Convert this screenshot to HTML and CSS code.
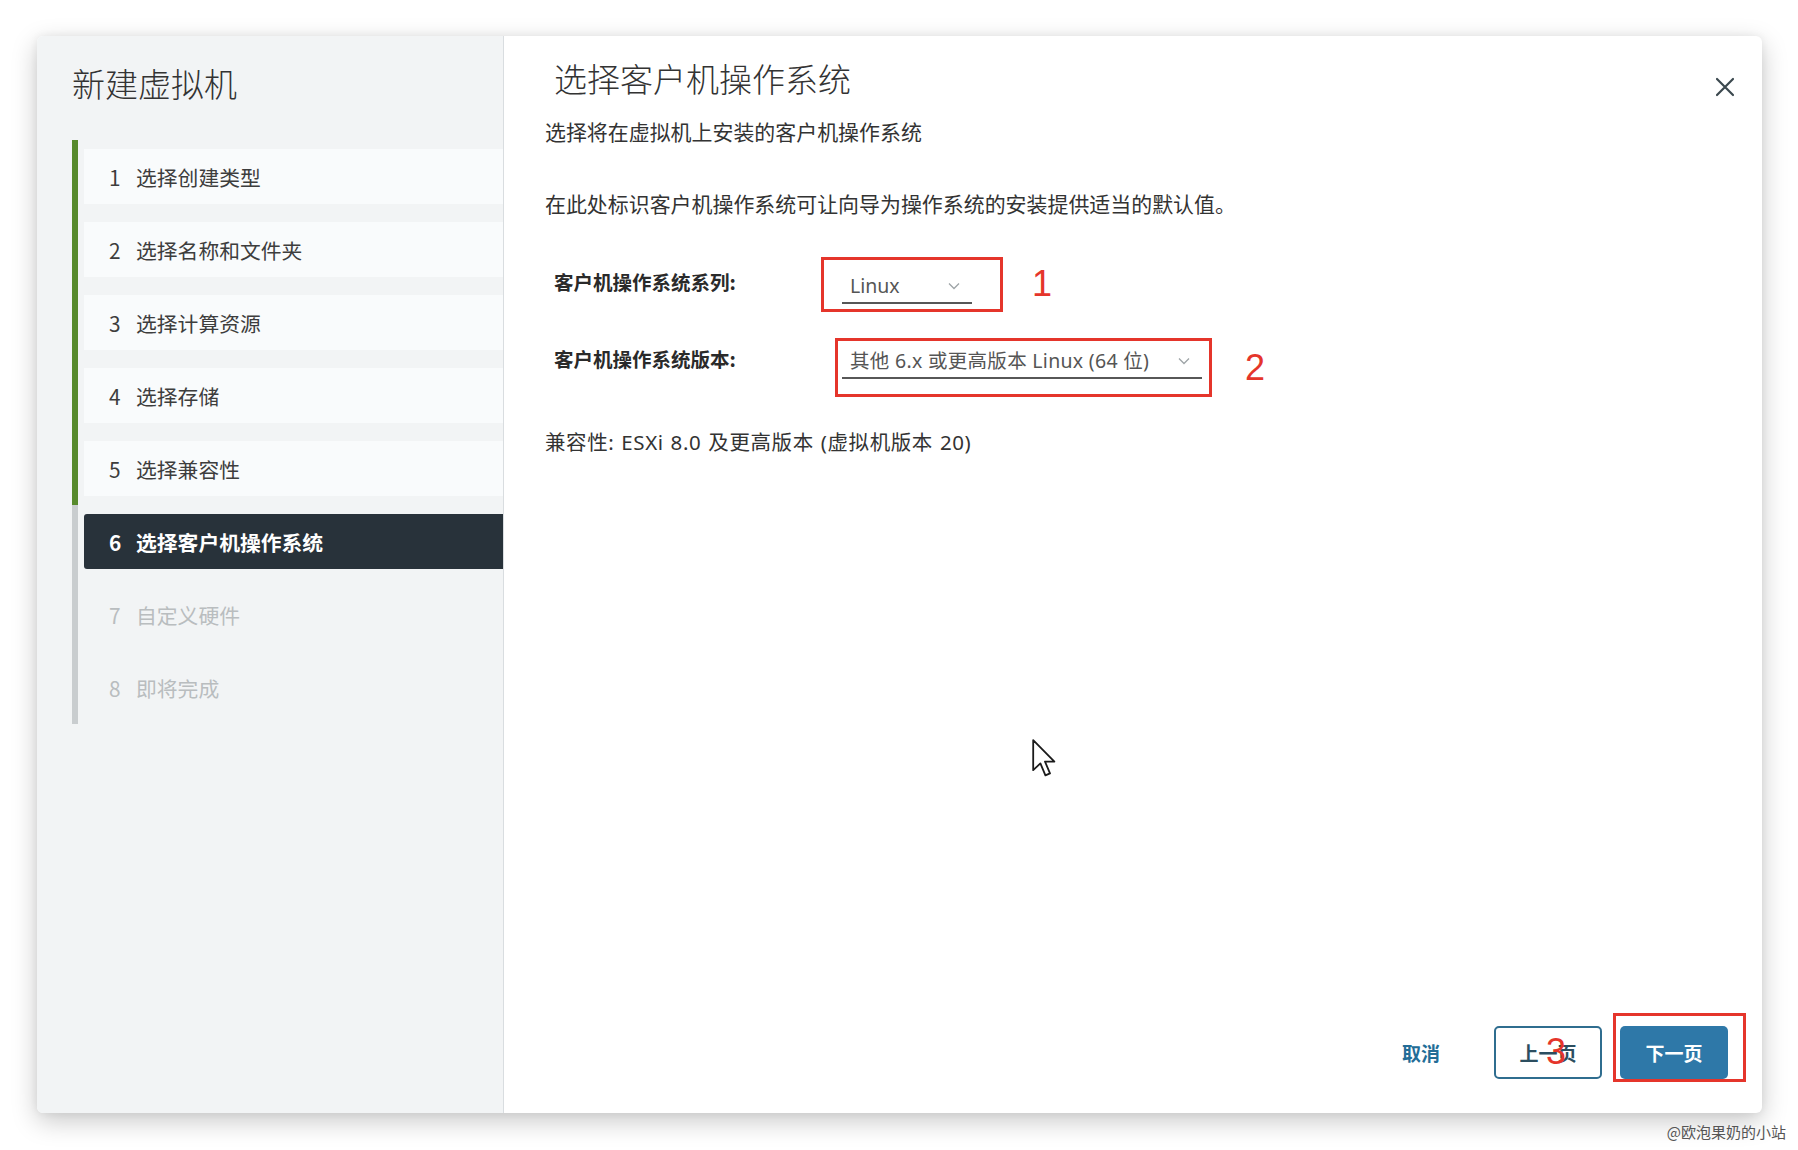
FILE: index.html
```html
<!DOCTYPE html>
<html lang="zh-CN">
<head>
<meta charset="utf-8">
<title>新建虚拟机</title>
<link rel="stylesheet" href="styles.css">
</head>
<body>
<div class="page">
  <div class="dialog">
    <aside class="side">
      <h1 class="side-title">新建虚拟机</h1>
      <ol class="steps">
        <li class="step done"><div class="step-box"><span class="num">1</span><span>选择创建类型</span></div></li>
        <li class="step done"><div class="step-box"><span class="num">2</span><span>选择名称和文件夹</span></div></li>
        <li class="step done"><div class="step-box"><span class="num">3</span><span>选择计算资源</span></div></li>
        <li class="step done"><div class="step-box"><span class="num">4</span><span>选择存储</span></div></li>
        <li class="step done"><div class="step-box"><span class="num">5</span><span>选择兼容性</span></div></li>
        <li class="step current"><div class="step-box"><span class="num">6</span><span>选择客户机操作系统</span></div></li>
        <li class="step todo"><div class="step-box"><span class="num">7</span><span>自定义硬件</span></div></li>
        <li class="step todo"><div class="step-box"><span class="num">8</span><span>即将完成</span></div></li>
      </ol>
    </aside>
    <main class="content">
      <div class="head">
        <h2 class="head-title">选择客户机操作系统</h2>
        <button class="close" aria-label="关闭">
          <svg width="20" height="20" viewBox="0 0 20 20"><path d="M2 2 L18 18 M18 2 L2 18" stroke="#3b484e" stroke-width="2.2" fill="none" stroke-linecap="round"/></svg>
        </button>
      </div>
      <p class="sub">选择将在虚拟机上安装的客户机操作系统</p>
      <p class="desc">在此处标识客户机操作系统可让向导为操作系统的安装提供适当的默认值。</p>

      <div class="form-row row1">
        <label class="flabel">客户机操作系统系列:</label>
        <div class="mark mark1">
          <div class="select s1">
            <span>Linux</span>
            <svg class="chev" width="12" height="8" viewBox="0 0 12 8"><polyline points="1,1.5 6,6.5 11,1.5" fill="none" stroke="#9ea4a7" stroke-width="1.3"/></svg>
          </div>
        </div>
        <span class="anno a1">1</span>
      </div>

      <div class="form-row row2">
        <label class="flabel">客户机操作系统版本:</label>
        <div class="mark mark2">
          <div class="select s2">
            <span class="sel-text">其他 6.x 或更高版本 Linux (64 位)</span>
            <svg class="chev" width="12" height="8" viewBox="0 0 12 8"><polyline points="1,1.5 6,6.5 11,1.5" fill="none" stroke="#9ea4a7" stroke-width="1.3"/></svg>
          </div>
        </div>
        <span class="anno a2">2</span>
      </div>

      <p class="compat">兼容性: ESXi 8.0 及更高版本 (虚拟机版本 20)</p>

      <div class="cursor">
        <svg width="24" height="38" viewBox="0 0 12 19"><path d="M0.6 0.6 L0.6 15.6 L4.2 12.2 L6.7 18.2 L9 17.2 L6.5 11.3 L11.2 11.3 Z" fill="#fff" stroke="#1a1a1a" stroke-width="0.9" stroke-linejoin="round"/></svg>
      </div>

      <footer class="foot">
        <button class="btn-link">取消</button>
        <button class="btn btn-outline">上一页<span class="anno a3">3</span></button>
        <div class="mark mark3">
          <button class="btn btn-primary">下一页</button>
        </div>
      </footer>
    </main>
  </div>
  <div class="watermark">@欧泡果奶的小站</div>
</div>
</body>
</html>
```

FILE: styles.css
```css
* { box-sizing: border-box; }

html, body {
  margin: 0;
  padding: 0;
  background: #ffffff;
}

body {
  font-family: "Noto Sans CJK SC", "Noto Sans", sans-serif;
  color: #333;
  width: 1798px;
  height: 1150px;
  overflow: hidden;
}

.page {
  padding-top: 36px;
}

.dialog {
  margin-left: 37px;
  width: 1725px;
  height: 1077px;
  display: flex;
  background: #fff;
  border-radius: 6px;
  overflow: hidden;
  box-shadow: 0 8px 26px rgba(0, 0, 0, 0.22), 0 0 8px rgba(0, 0, 0, 0.06);
}

/* ---------- left side ---------- */
.side {
  width: 467px;
  flex: none;
  background: #f2f4f5;
  border-right: 1px solid #d9dde0;
  padding-top: 27px;
}

.side-title {
  margin: 0 0 0 35px;
  font-size: 33px;
  line-height: 40px;
  font-weight: 300;
  color: #333;
  height: 77px;
}

.steps {
  list-style: none;
  margin: 0 0 0 35px;
  padding: 0;
}

.step {
  border-left: 6px solid #c9cdcf;
  padding: 9px 0 9px 6px;
}

.step.done {
  border-left-color: #578a2c;
}

.step-box {
  height: 55px;
  display: flex;
  align-items: center;
  padding-left: 25px;
  font-size: 20.8px;
  color: #3d3d3d;
}

.num {
  width: 27px;
  flex: none;
}

.step.done .step-box {
  background: #f9fbfc;
}

.step.current .step-box {
  background: #28323a;
  color: #fff;
  font-weight: 700;
  border-radius: 3px 0 0 3px;
}

.step.todo .step-box {
  color: #b9bdbf;
}

/* ---------- right content ---------- */
.content {
  flex: 1;
  position: relative;
  display: flex;
  flex-direction: column;
  padding: 22px 0 31px 41px;
}

.head {
  display: flex;
  justify-content: space-between;
  align-items: flex-start;
  padding-right: 27px;
}

.head-title {
  margin: 0 0 0 9px;
  font-size: 33px;
  line-height: 40px;
  font-weight: 300;
  color: #333;
}

.close {
  margin-top: 19px;
  width: 20px;
  height: 20px;
  padding: 0;
  border: 0;
  background: none;
  display: flex;
}

.sub,
.desc,
.compat {
  margin: 0;
  font-size: 20.95px;
  line-height: 30px;
  color: #333;
}

.sub { margin-top: 18px; }
.desc { margin-top: 42px; }

.compat {
  margin-top: 30px;
  font-family: "Noto Sans", "Noto Sans CJK SC", sans-serif;
  font-size: 20.5px;
  letter-spacing: 0.6px;
  word-spacing: 1px;
}

.form-row {
  display: flex;
  align-items: flex-start;
  padding-left: 9px;
}

.row1 { margin-top: 39px; }
.row2 { margin-top: 26px; }

.flabel {
  font-size: 19.5px;
  line-height: 30px;
  font-weight: 700;
  color: #2a2a2a;
}

.row1 .flabel { width: 267px; margin-top: 10px; }
.row2 .flabel { width: 281px; margin-top: 6px; }

.mark {
  border: 3px solid #e5352b;
}

.mark1 { padding: 10px 28px 5px 18px; }
.mark2 { padding: 4px 7px 15px 4px; }
.mark3 { padding: 10px 15px 0 4px; }

.select {
  height: 34px;
  border-bottom: 2px solid #575757;
  display: flex;
  align-items: center;
  justify-content: space-between;
  padding: 0 12px 0 8px;
  font-family: "Noto Sans", "Noto Sans CJK SC", sans-serif;
  font-size: 19.5px;
  line-height: 32px;
  color: #555;
}

.sel-text {
  letter-spacing: 0.3px;
}

.s1 { width: 130px; }
.s2 { width: 360px; }

.chev { flex: none; }

.anno {
  font-family: "Liberation Sans", Arial, sans-serif;
  font-size: 36px;
  line-height: 40px;
  color: #e5352b;
}

.a1 { margin-left: 29px; margin-top: 7px; }
.a2 { margin-left: 33px; margin-top: 10px; }

.cursor {
  position: absolute;
  left: 528px;
  top: 703px;
  display: flex;
}

/* ---------- footer ---------- */
.foot {
  margin-top: auto;
  display: flex;
  justify-content: flex-end;
  align-items: flex-end;
  padding-right: 16px;
}

.btn-link {
  border: 0;
  background: none;
  padding: 0;
  font-family: inherit;
  font-size: 19px;
  line-height: 30px;
  font-weight: 600;
  color: #236d97;
  margin-bottom: 14px;
  margin-right: 54px;
}

.btn {
  width: 108px;
  height: 53px;
  font-family: inherit;
  font-size: 19px;
  font-weight: 600;
  border-radius: 5px;
  padding: 0;
}

.btn-outline {
  position: relative;
  background: #fff;
  border: 2px solid #2f6d8f;
  color: #2c4e60;
  margin-bottom: 3px;
  margin-right: 11px;
}

.a3 {
  position: absolute;
  left: 50px;
  top: 4px;
  font-weight: 400;
}

.btn-primary {
  display: block;
  background: #2e78a8;
  border: 0;
  color: #fff;
}

.watermark {
  margin-top: 9px;
  text-align: right;
  padding-right: 12px;
  font-size: 15px;
  line-height: 20px;
  color: #555;
}
```
